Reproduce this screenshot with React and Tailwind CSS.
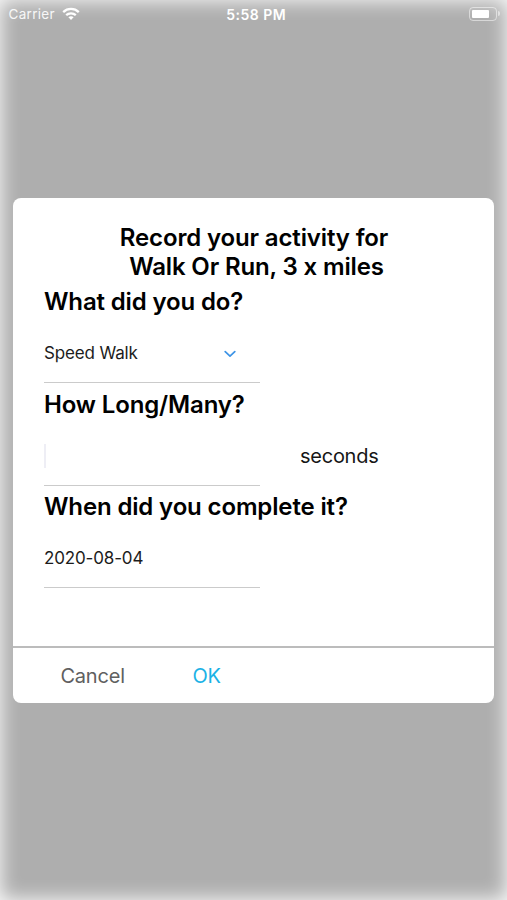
function StatusBar() {
  return (
    <header className="flex h-7 shrink-0 items-center pl-[8.5px] pr-[7px] text-[13.5px] text-white">
      <div className="flex flex-1 items-center gap-[7px]">
        <span className="tracking-[0.3px] opacity-90">Carrier</span>
        <svg width="18" height="14" viewBox="0 0 18 14" fill="none" stroke="white" strokeWidth="2.3" className="-mt-px">
          <path d="M1.2 5.1C5.6.9 12.4.9 16.8 5.1" />
          <path d="M4.2 8.2C6.9 5.7 11.1 5.7 13.8 8.2" />
          <path d="M9 12.9L6.4 10.3C7.9 9 10.1 9 11.6 10.3Z" fill="white" stroke="none" />
        </svg>
      </div>
      <span className="mr-[-4px] text-[14px] font-semibold tracking-[0.5px]">5:58 PM</span>
      <div className="flex flex-1 items-center justify-end gap-px">
        <div className="-mt-px h-[14px] w-[28px] rounded-[4px] border border-white/50 p-[2px]">
          <div className="h-full w-[17px] rounded-[1px] bg-white" />
        </div>
        <div className="-mt-px h-[5px] w-[2px] rounded-r-full bg-white/50" />
      </div>
    </header>
  );
}

function Heading({ children }) {
  return <h2 className="h-[29px] whitespace-nowrap text-[24px] font-semibold leading-[29px] tracking-[-0.14px]">{children}</h2>;
}

function Field({ label, unit, children }) {
  return (
    <section className="h-[102.5px]">
      <Heading>{label}</Heading>
      <div className="flex">
        <div className="flex h-[67px] w-[216px] items-center border-b-[1.5px] border-[#cbcbcb] pt-[9px] text-[17px] tracking-[-0.15px] text-[#1c1c1c]">
          {children}
        </div>
        {unit && <span className="ml-10 mt-[23px] h-7 text-[20px] leading-7 tracking-[-0.25px] text-[#161616]">{unit}</span>}
      </div>
    </section>
  );
}

export default function App() {
  return (
    <div
      className="flex h-[900px] w-[507px] flex-col overflow-hidden bg-[#aeaeae] text-black shadow-[inset_0_0_20px_#fff]"
      style={{ fontFamily: 'Inter, "Liberation Sans", sans-serif' }}
    >
      <StatusBar />
      <main className="ml-[13.4px] mt-[170px] flex h-[505px] w-[481px] flex-col rounded-[8px] bg-white">
        <div className="h-[450px] border-b-2 border-[#bcbcbc] pl-[30.6px] pt-[25px]">
          <h1 className="mb-[6px] flex w-[420px] flex-col items-center whitespace-nowrap text-[24px] font-semibold leading-[29px] tracking-[-0.14px]">
            <span>Record your activity for</span>
            <span className="ml-[5px]">Walk Or Run, 3 x miles</span>
          </h1>
          <Field label="What did you do?">
            <span className="flex-1">Speed Walk</span>
            <svg className="mr-[24px]" width="12" height="8" viewBox="0 0 12 8" fill="none" stroke="#3d94e6" strokeWidth="1.7" strokeLinecap="round" strokeLinejoin="round">
              <path d="M1.2 1.6L6 6.2L10.8 1.6" />
            </svg>
          </Field>
          <Field label="How Long/Many?" unit="seconds">
            <span className="h-6 w-[2px] bg-[#eeeef5]" />
          </Field>
          <Field label="When did you complete it?">
            <span>2020-08-04</span>
          </Field>
        </div>
        <footer className="flex flex-1 items-center pl-[47px] pt-px text-[20px] tracking-[-0.2px]">
          <button className="w-[132px] text-left text-[#606060]">Cancel</button>
          <button className="text-[#1bb2e6]">OK</button>
        </footer>
      </main>
    </div>
  );
}
